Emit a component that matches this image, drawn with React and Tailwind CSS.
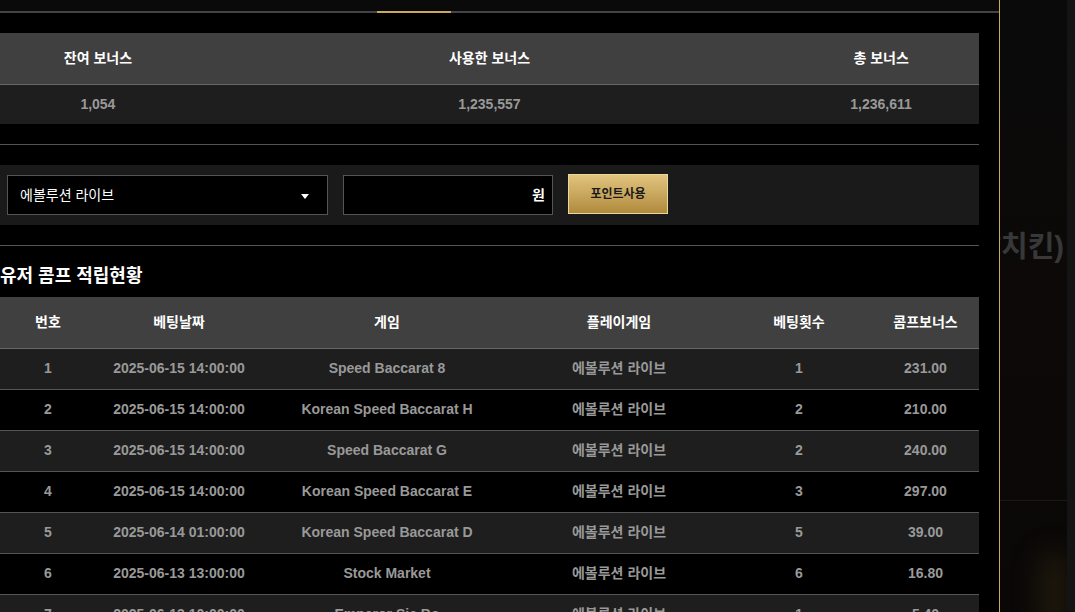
import React from 'react';

const summary = [
  { label: '잔여 보너스', value: '1,054', width: 'w-[20%]' },
  { label: '사용한 보너스', value: '1,235,557', width: 'w-[60%]' },
  { label: '총 보너스', value: '1,236,611', width: 'w-[20%]' },
];

const columns = [
  { label: '번호', width: 'w-[96px]' },
  { label: '베팅날짜', width: 'w-[166px]' },
  { label: '게임', width: 'w-[250px]' },
  { label: '플레이게임', width: 'w-[214px]' },
  { label: '베팅횟수', width: 'w-[146px]' },
  { label: '콤프보너스', width: 'w-[107px]' },
];

const rows = [
  { no: 1, date: '2025-06-15 14:00:00', game: 'Speed Baccarat 8', count: 1, bonus: '231.00' },
  { no: 2, date: '2025-06-15 14:00:00', game: 'Korean Speed Baccarat H', count: 2, bonus: '210.00' },
  { no: 3, date: '2025-06-15 14:00:00', game: 'Speed Baccarat G', count: 2, bonus: '240.00' },
  { no: 4, date: '2025-06-15 14:00:00', game: 'Korean Speed Baccarat E', count: 3, bonus: '297.00' },
  { no: 5, date: '2025-06-14 01:00:00', game: 'Korean Speed Baccarat D', count: 5, bonus: '39.00' },
  { no: 6, date: '2025-06-13 13:00:00', game: 'Stock Market', count: 6, bonus: '16.80' },
  { no: 7, date: '2025-06-13 10:00:00', game: 'Emperor Sic Bo', count: 1, bonus: '5.40' },
  { no: 8, date: '2025-06-13 09:00:00', game: 'Lightning Roulette', count: 2, bonus: '12.00' },
];

const App = () => {
  return (
    <div className="flex h-[612px] w-[1075px] overflow-hidden bg-black font-['Liberation_Sans','Noto_Sans_CJK_KR',sans-serif]">
      {/* Modal */}
      <div className="relative z-10 w-[1000px] shrink-0 border-r border-[#c9a95c] bg-black">
        {/* Tabs underline */}
        <div className="h-[11px] bg-[#0a0a0a]" />
        <div className="flex h-[2px] bg-[#444]">
          <div className="w-[377px]" />
          <div className="w-[74px] bg-[#c9a95c]" />
        </div>

        <div className="pr-[20px] pt-[20px]">
          {/* Summary */}
          <table className="w-full border-collapse">
            <thead>
              <tr className="h-[51px] bg-[#404040] border-b border-[#666]">
                {summary.map((s) => (
                  <th key={s.label} className={`${s.width} text-center text-[14px] font-bold text-white`}>
                    {s.label}
                  </th>
                ))}
              </tr>
            </thead>
            <tbody>
              <tr className="h-[40px] bg-[#1e1e1e]">
                {summary.map((s) => (
                  <td key={s.label} className="text-center text-[14px] font-bold text-[#999]">
                    {s.value}
                  </td>
                ))}
              </tr>
            </tbody>
          </table>

          <div className="mt-[20px] border-t border-[#555]" />

          {/* Point use form */}
          <div className="mt-[20px] flex h-[60px] items-center gap-[15px] bg-[#1a1a1a] pl-[7px]">
            <div className="relative flex h-[40px] w-[321px] items-center border border-[#555] bg-black pl-3">
              <span className="text-[14px] text-white">에볼루션 라이브</span>
              <span className="absolute right-[18px] top-[18px] h-0 w-0 border-x-[4px] border-t-[5px] border-x-transparent border-t-white" />
            </div>
            <div className="flex h-[40px] w-[210px] items-center justify-end border border-[#555] bg-black pr-[7px]">
              <span className="text-[14px] font-bold text-white">원</span>
            </div>
            <button className="-mt-[2px] h-[40px] w-[100px] border border-[#ecd79a] bg-gradient-to-b from-[#e2c47e] to-[#b08b3d] text-[12px] font-bold text-[#1a1a1a]">
              포인트사용
            </button>
          </div>

          <div className="mt-[20px] border-t border-[#555]" />

          {/* Comp table */}
          <h3 className="mt-[17px] text-[18px] font-bold leading-[26px] text-white">유저 콤프 적립현황</h3>
          <table className="mt-[8px] w-full table-fixed border-collapse">
            <thead>
              <tr className="h-[51px] bg-[#404040] border-b border-[#666]">
                {columns.map((c) => (
                  <th key={c.label} className={`${c.width} text-center text-[14px] font-bold text-white`}>
                    {c.label}
                  </th>
                ))}
              </tr>
            </thead>
            <tbody>
              {rows.map((r, i) => (
                <tr
                  key={r.no}
                  className={`h-[41px] border-b border-[#555] text-center text-[14px] font-bold text-[#999] ${
                    i % 2 === 0 ? 'bg-[#1e1e1e]' : 'bg-black'
                  }`}
                >
                  <td>{r.no}</td>
                  <td>{r.date}</td>
                  <td>{r.game}</td>
                  <td>에볼루션 라이브</td>
                  <td>{r.count}</td>
                  <td>{r.bonus}</td>
                </tr>
              ))}
            </tbody>
          </table>
        </div>
      </div>

      {/* Background page behind the modal */}
      <div className="relative flex-1 overflow-hidden bg-gradient-to-b from-[#0a0a0a] via-[#0c0908] to-[#0a0807]">
        <span className="absolute right-[11px] top-[226px] whitespace-nowrap text-[29px] font-bold text-[#383838]">
          순살치킨)
        </span>
        <div className="absolute left-0 right-[8px] top-[500px] h-px bg-[#181818]" />
        <div className="absolute bottom-[-30px] right-[6px] h-[90px] w-[30px] rounded-full bg-[#1e180c] blur-md" />
        <div className="absolute right-0 top-0 h-full w-[8px] bg-[#141414]" />
      </div>
    </div>
  );
};

export default App;
